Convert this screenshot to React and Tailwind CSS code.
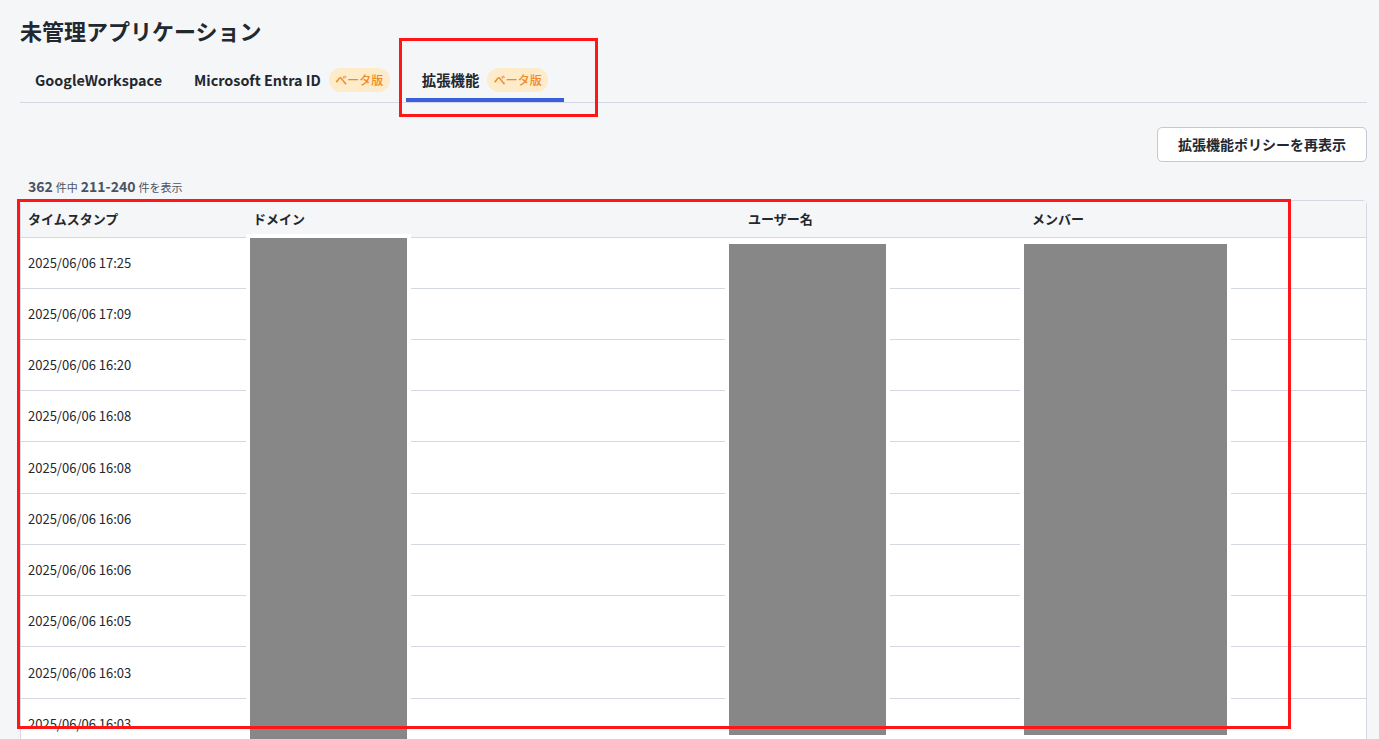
import React from "react";

const rows = [
  "2025/06/06 17:25",
  "2025/06/06 17:09",
  "2025/06/06 16:20",
  "2025/06/06 16:08",
  "2025/06/06 16:08",
  "2025/06/06 16:06",
  "2025/06/06 16:06",
  "2025/06/06 16:05",
  "2025/06/06 16:03",
  "2025/06/06 16:03",
];

function Badge() {
  return (
    <span className="ml-2 inline-flex h-[24px] w-[61px] items-center justify-center rounded-full bg-[#fdebc9] text-[12px] font-medium text-[#f08a24]">
      ベータ版
    </span>
  );
}

function Tab({ label, beta, active, className = "" }) {
  return (
    <div className={`relative flex h-[44px] items-center px-4 ${className}`}>
      <span className="text-[14.4px] font-bold text-[#23272e]">{label}</span>
      {beta && <Badge />}
      {active && (
        <div className="absolute bottom-0 left-0 right-0 h-[4px] bg-[#3b5fd9]" />
      )}
    </div>
  );
}

function App() {
  return (
    <div
      className="relative h-[739px] overflow-hidden bg-[#f5f6f8] pl-5 pr-3 text-[#23272e]"
      style={{ fontFamily: '"Noto Sans CJK JP", "Noto Sans", sans-serif' }}
    >
      <h1 className="pt-[16px] text-[22px] font-bold leading-[28px]">
        未管理アプリケーション
      </h1>

      {/* tabs */}
      <div className="mt-[14px] flex border-b border-[#d3d8e2]">
        <Tab label="GoogleWorkspace" className="pl-[15px]" />
        <Tab label="Microsoft Entra ID" beta />
        <Tab label="拡張機能" beta active />
      </div>

      <div className="mt-[24px] flex justify-end">
        <button className="h-[35px] rounded-[5px] border border-[#c4c8d0] bg-white px-[20px] text-[14px] font-bold text-[#23272e]">
          拡張機能ポリシーを再表示
        </button>
      </div>

      <div className="mt-[14px] flex h-[20px] items-baseline pl-2 text-[#4b5360]">
        <span className="text-[14px] font-bold">362</span>
        <span className="ml-[3px] text-[11px]">件中</span>
        <span className="ml-[3px] text-[14px] font-bold">211-240</span>
        <span className="ml-[3px] text-[11px]">件を表示</span>
      </div>

      {/* table */}
      <div className="relative mt-[4px] rounded-t-[5px] border border-b-0 border-[#d3d8e2] bg-white">
        <div className="grid h-[37px] grid-cols-[225px_495px_284px_1fr] items-center border-b border-[#d3d8e2] bg-[#f5f6f8] text-[13px] font-bold">
          <div className="pl-[7px]">タイムスタンプ</div>
          <div className="pl-[7px]">ドメイン</div>
          <div className="pl-[7px]">ユーザー名</div>
          <div className="pl-[7px]">メンバー</div>
        </div>
        {rows.map((t, i) => (
          <div
            key={i}
            className={`grid grid-cols-[225px_495px_284px_1fr] items-center border-b border-[#d3d8e2] text-[13px] ${
              i === 0 ? "h-[50.5px]" : "h-[51.25px]"
            }`}
          >
            <div className="pl-[7px]">{t}</div>
            <div />
            <div />
            <div />
          </div>
        ))}

        {/* redacted columns */}
        <div className="absolute left-[225px] top-[33px] h-[520px] w-[165px] border-4 border-white bg-[#878787]" />
        <div className="absolute left-[704px] top-[39px] h-[499px] w-[165px] border-4 border-white bg-[#878787]" />
        <div className="absolute left-[999px] top-[39px] h-[499px] w-[211px] border-4 border-white bg-[#878787]" />
      </div>

      {/* annotation boxes */}
      <div className="absolute left-[399px] top-[38px] h-[79px] w-[199px] border-[3px] border-[#ff1616]" />
      <div className="absolute left-[17px] top-[199px] h-[530px] w-[1274px] border-[3px] border-[#ff1616]" />
    </div>
  );
}

export default App;
